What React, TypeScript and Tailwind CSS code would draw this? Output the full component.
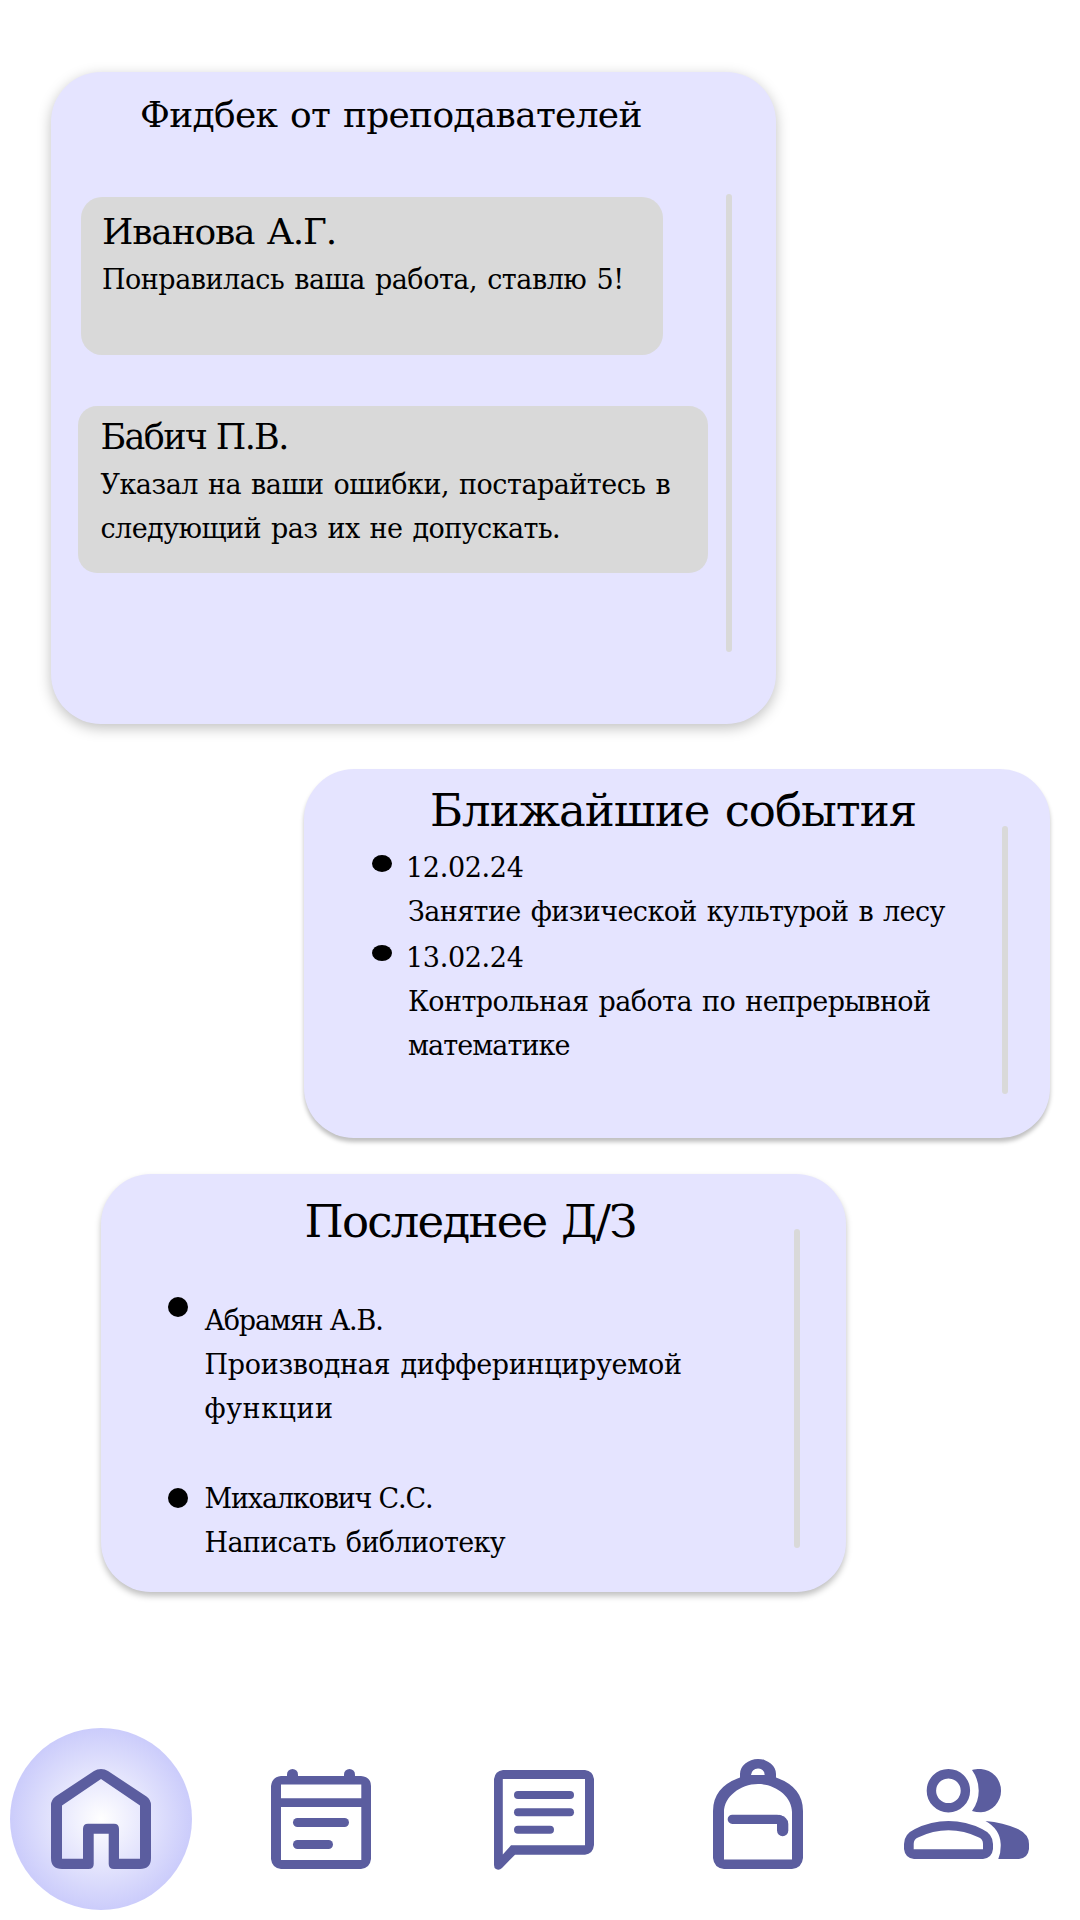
import type { ReactNode } from "react";

const ICON = "#5b5d9f";

function Scrollbar({ className }: { className: string }) {
  return <div className={`w-[5.5px] shrink-0 rounded-full bg-[#d9d9d9] ${className}`} />;
}

function Card({ className, children }: { className: string; children: ReactNode }) {
  return <section className={`flex shrink-0 rounded-[50px] bg-[#e5e4ff] ${className}`}>{children}</section>;
}

function Line({ className, children }: { className: string; children: ReactNode }) {
  return <p className={`text-[27px] leading-[44px] ${className}`}>{children}</p>;
}

function Item({ bullet, className = "", children }: { bullet: string; className?: string; children: ReactNode }) {
  return (
    <li className={`flex ${className}`}>
      <span className={`w-5 shrink-0 rounded-[50%] bg-black ${bullet}`} />
      <div>{children}</div>
    </li>
  );
}

function HomeIcon() {
  return (
    <svg width="100" height="100" viewBox="0 0 100 100" fill={ICON} fillRule="evenodd">
      <path d="M50 0Q54 0 57 2L95.500 27.500Q100 31 100 36V89Q100 100 89 100H63Q57.700 100 57.700 95V64.700H42.700V95Q42.700 100 37.500 100H11Q0 100 0 89V36Q0 31 4.500 27.500L43 2Q46 0 50 0ZM50 10L11 36.500V89.700H32V60Q32 54.700 37 54.700H63Q68 54.700 68 60V89.700H89V36.500Z" />
    </svg>
  );
}

function CalendarIcon() {
  return (
    <svg width="100" height="100" viewBox="0 0 100 100" fill={ICON}>
      <path fillRule="evenodd" d="M10 7H90Q100 8 100 17V90Q99 99 90 100H10Q1 99 0 90V17Q1 8 10 7ZM10 15.500V29.300H90.300V15.500ZM10 38V91H90.300V38Z" />
      <rect x="16" width="11" height="14" rx="5.500" />
      <rect x="73" width="11" height="14" rx="5.500" />
      <rect x="22" y="49" width="56" height="9" rx="4.500" />
      <rect x="22" y="71" width="40" height="9" rx="4.500" />
    </svg>
  );
}

function ChatIcon() {
  return (
    <svg width="100" height="100" viewBox="0 0 100 100" fill={ICON}>
      <path fillRule="evenodd" d="M9 0H91Q99 1 100 9V75Q99 84 91 84.700H21L8 98Q5 101 2 99Q0 98 0 95V9Q1 1 9 0ZM8.800 9V84.500L17 75.300H91V9Z" />
      <rect x="20" y="21" width="60" height="8" rx="4" />
      <rect x="20" y="38.300" width="60" height="8" rx="4" />
      <rect x="20" y="55.700" width="40" height="8" rx="4" />
    </svg>
  );
}

function BackpackIcon() {
  return (
    <svg width="90" height="110" viewBox="0 0 90 110" fill={ICON}>
      <path fillRule="evenodd" d="M27 18.500V15A18 15 0 0 1 63 15V18.500Q90 28 90 52V99Q89 109 79 110H11Q1 109 0 99V52Q0 28 27 18.500ZM38 16H51.700Q51 9.500 45 9.500T38 16ZM45 25C27 25 11 38 11 53V100.500H79V53C79 38 63 25 45 25Z" />
      <path d="M19.300 60.300H64Q69.700 60.300 69.700 66" fill="none" stroke={ICON} strokeWidth="9.300" strokeLinecap="round" />
      <path d="M64 60L66 55.800Q75.300 58 75.300 65V71.500A5.600 5.600 0 0 1 64 71.500Z" />
    </svg>
  );
}

function PeopleIcon() {
  return (
    <svg width="125" height="90" viewBox="0 0 125 90" fill={ICON}>
      <circle cx="44.400" cy="21.700" r="17" fill="none" stroke={ICON} strokeWidth="9.400" />
      <path d="M68 1C72 -.2 77 0 77 0A21.500 21.700 0 0 1 77 43.300Q72 43.300 68 42Q74.700 33 74.700 21.700T68 1Z" />
      <path fillRule="evenodd" d="M44.500 52Q62 52 78 60Q89 65 89 75V80Q88 89 79 90H10Q1 89 0 80V75Q0 65 11 60Q27 52 44.500 52ZM44.500 61.300Q29 61.300 14 68.500Q9.700 70 9.700 75V80.300H79V75Q79 70 75 68.500Q60 61.300 44.500 61.300Z" />
      <path d="M81.500 52Q99 53.500 114 60Q125 65.500 125 75V80Q124 89 115 90H94.300Q97 84 96.700 75Q96 60 81.500 52Z" />
    </svg>
  );
}

export default function App() {
  return (
    <main className="flex h-[1920px] w-[1080px] flex-col overflow-hidden bg-white pt-[72px] font-['DejaVu_Serif',serif] whitespace-nowrap text-black [font-kerning:none]">
      <Card className="ml-[51px] h-[652px] w-[725px] shadow-[0_4px_14px_rgba(0,0,0,0.25)]">
        <div className="w-[675px] pt-[15px]">
          <h2 className="ml-[89px] text-[36px] leading-[56px] tracking-[-0.71px] [word-spacing:2px]">Фидбек от преподавателей</h2>
          <article className="mt-[54px] ml-[30px] h-[158px] w-[582px] rounded-[21px] bg-[#d9d9d9] pt-[9px] pl-[21px]">
            <h3 className="text-[36px] leading-[52px] tracking-[-1.16px] [word-spacing:2px]">Иванова А.Г.</h3>
            <Line className="tracking-[-0.48px] [word-spacing:2px]">Понравилась ваша работа, ставлю 5!</Line>
          </article>
          <article className="mt-[51px] ml-[27px] h-[167px] w-[630px] rounded-[19px] bg-[#d9d9d9] pt-[6px] pl-[22.500px]">
            <h3 className="text-[35px] leading-[51px] tracking-[-1.66px]">Бабич П.В.</h3>
            <Line className="tracking-[-0.51px] [word-spacing:2px]">Указал на ваши ошибки, постарайтесь в</Line>
            <Line className="tracking-[-0.55px] [word-spacing:2px]">следующий раз их не допускать.</Line>
          </article>
        </div>
        <Scrollbar className="mt-[122px] h-[458px]" />
      </Card>

      <Card className="mt-[45px] ml-[304px] h-[369px] w-[745.500px] shadow-[0_4px_4px_rgba(0,0,0,0.25)]">
        <div className="w-[698px] pt-[14px]">
          <h2 className="ml-[126px] text-[45px] leading-[56px] tracking-[-1px] [word-spacing:2px]">Ближайшие события</h2>
          <ul className="mt-[7px] pl-[68px]">
            <Item bullet="mt-[9px] mr-4 h-[17px]">
              <Line className="-ml-[2px] tracking-[-0.34px]">12.02.24</Line>
              <Line className="tracking-[-0.59px] [word-spacing:2px]">Занятие физической культурой в лесу</Line>
            </Item>
            <Item bullet="mt-[9px] mr-4 h-4" className="mt-[2px]">
              <Line className="-ml-[2px] tracking-[-0.34px]">13.02.24</Line>
              <Line className="tracking-[-0.56px] [word-spacing:2px]">Контрольная работа по непрерывной</Line>
              <Line className="tracking-[-0.94px]">математике</Line>
            </Item>
          </ul>
        </div>
        <Scrollbar className="mt-[56.500px] h-[268px]" />
      </Card>

      <Card className="mt-[36px] ml-[100.500px] h-[418px] w-[745px] shadow-[0_4px_6px_rgba(0,0,0,0.25)]">
        <div className="w-[693.500px] pt-[20px]">
          <h2 className="ml-[204px] text-[45px] leading-[56px] tracking-[-1.75px] [word-spacing:2px]">Последнее Д/З</h2>
          <ul className="mt-[49px] pl-[67px]">
            <Item bullet="-mt-[2px] mr-[17px] h-5">
              <Line className="tracking-[-1.17px]">Абрамян А.В.</Line>
              <Line className="tracking-[-0.3px] [word-spacing:2px]">Производная дифферинцируемой</Line>
              <Line className="tracking-[0.54px]">функции</Line>
            </Item>
            <Item bullet="mt-[11px] mr-[17px] h-5" className="mt-[46px]">
              <Line className="tracking-[-1.16px]">Михалкович С.С.</Line>
              <Line className="tracking-[-0.64px] [word-spacing:2px]">Написать библиотеку</Line>
            </Item>
          </ul>
        </div>
        <Scrollbar className="mt-[54.500px] h-[319px]" />
      </Card>

      <nav className="mt-[136px] flex items-start pl-[10px]">
        <button aria-label="Главная" className="flex size-[182px] items-center justify-center rounded-full bg-[radial-gradient(closest-side,#ffffff,#cbccfb)]">
          <HomeIcon />
        </button>
        <button aria-label="Календарь" className="mt-[41px] ml-[79px]">
          <CalendarIcon />
        </button>
        <button aria-label="Сообщения" className="mt-[42px] ml-[123px]">
          <ChatIcon />
        </button>
        <button aria-label="Учёба" className="mt-[31px] ml-[119px]">
          <BackpackIcon />
        </button>
        <button aria-label="Группа" className="mt-[41px] ml-[101px]">
          <PeopleIcon />
        </button>
      </nav>
    </main>
  );
}
